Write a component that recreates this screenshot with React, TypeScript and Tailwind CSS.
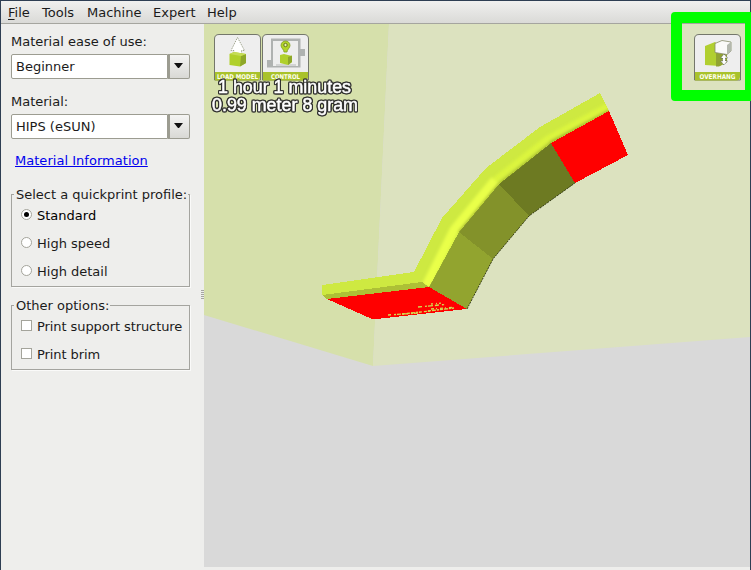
import { useState } from "react";
import type { ReactNode } from "react";

function SelectBox({ label, value }: { label: string; value: string }) {
  return (
    <div className="flex h-[60px] flex-col">
      <span className="h-[22px] leading-[20px]">{label}</span>
      <div className="flex h-[25px]">
        <div className="w-[157px] rounded-l-[2px] border border-[#9c9c91] bg-white pl-1 leading-[23px]">
          {value}
        </div>
        <button className="flex w-[22px] items-center justify-center rounded-r-[2px] border border-l-2 border-[#9c9c91] bg-linear-to-b from-[#f4f4f3] to-[#d9d9d5] pb-[3px] pr-[3px]">
          <svg width="9" height="5" viewBox="0 0 9 5" className="shrink-0">
            <path d="M0 0H9L5 5H4Z" fill="#111" />
          </svg>
        </button>
      </div>
    </div>
  );
}

function Group({ title, className, children }: { title: string; className: string; children: ReactNode }) {
  return (
    <div className={`w-[179px] border border-[#a4a49f] shadow-[1px_1px_0_#fafaf9] ${className}`}>
      <div className="-mt-[10px] flex h-[20px]">
        <span className="ml-[2px] whitespace-nowrap bg-[#eeeeec] pl-[2px] pr-px leading-[20px]">{title}</span>
      </div>
      {children}
    </div>
  );
}

function Option({ kind, label, checked = false, onClick }: { kind: "radio" | "check"; label: string; checked?: boolean; onClick?: () => void }) {
  return (
    <div className="flex h-[28px] items-center gap-[5px] pl-[9px]" onClick={onClick}>
      <span
        className={`mb-px flex size-[11px] items-center justify-center border border-[#a4a49b] bg-white ${kind === "radio" ? "rounded-full" : ""}`}
      >
        {checked && <span className={`size-[5px] bg-black ${kind === "radio" ? "rounded-full" : ""}`} />}
      </span>
      <span className={`whitespace-nowrap pt-[2px] ${kind === "check" ? "tracking-[-0.08px]" : ""} ${checked ? "text-black" : ""}`}>{label}</span>
    </div>
  );
}

function ToolButton({ label, width, children }: { label: string; width: number; children: ReactNode }) {
  return (
    <svg width="47" height="47" viewBox="0 0 47 47" className="block">
      <path d="M.5 46V5Q.5.5 5 .5H42Q46.5.5 46.5 5V46Z" fill="#eee" stroke="#74776b" />
      {children}
      <path d="M1 38H46V43Q46 46.5 42 46.5H1Z" fill="#a9c22b" />
      <text
        x={(47 - width) / 2}
        y="44.5"
        textLength={width}
        lengthAdjust="spacingAndGlyphs"
        fill="#fffff0"
        fontSize="6.5"
        fontWeight="bold"
        fontFamily="DejaVu Sans, sans-serif"
      >
        {label}
      </text>
    </svg>
  );
}

function Scene() {
  return (
    <svg className="absolute inset-0" width="546" height="543" viewBox="204 24 546 543">
      <defs>
        <filter id="soft" x="-10%" y="-10%" width="120%" height="120%">
          <feGaussianBlur stdDeviation="1.8" />
        </filter>
        <clipPath id="rim">
          <path d="M322 285L414 272L442 218L486 168L540 127L600 93L609 111L551 143L499 184L459 232L429 287L422 282L322 295Z" />
        </clipPath>
      </defs>
      <path d="M204 24H750V567H204Z" fill="#d9d9d9" />
      <path d="M204 24H389L373 366L204 315Z" fill="#d6e0ab" />
      <path d="M389 24H750V337L373 366Z" fill="#dce2bf" />
      <g shapeRendering="crispEdges">
        <path d="M322 285L414 272L442 218L486 168L540 127L600 93L609 111L551 143L499 184L459 232L429 287L422 282L322 295Z" fill="#cee941" />
        <path d="M429 287L459 232L493 259L467 309Z" fill="#92a42f" />
        <path d="M459 232L499 184L529 216L493 259Z" fill="#83922a" />
        <path d="M499 184L551 143L575 183L529 216Z" fill="#6d7a22" />
      </g>
      <g clipPath="url(#rim)">
        <g filter="url(#soft)" fill="none">
          <path d="M426 286L454 230L495 180" stroke="#e9ff4a" strokeWidth="9" />
          <path d="M495 180L547 139L608 106" stroke="#dbf53d" strokeWidth="6" />
          <path d="M460 233L500 185L552 144" stroke="#a6b92f" strokeWidth="5" />
          <path d="M551 144L611 112" stroke="#a6b92f" strokeWidth="6" />
        </g>
      </g>
      <g shapeRendering="crispEdges">
        <path d="M322 295L422 282L429 287L327 299Z" fill="#adc036" />
        <path d="M327 299L429 287L467 309L376 319H372Z" fill="red" />
        <path d="M551 143L609 111L628 155L575 183Z" fill="red" />
      </g>
      <path d="M467 309L493 259L529 216L575 183" fill="none" stroke="#39401c" strokeWidth="1" strokeDasharray="2 1" />
      <g stroke="#d2dc50" strokeWidth="1.4" fill="none">
        <path d="M388 315L419 313" strokeDasharray="3 3 2 1 4 1 2 1" />
        <path d="M402 314L430 311" strokeDasharray="3 2 3 1 4 1 2 1" />
        <path d="M428 311L454 308" strokeDasharray="3 1 4 1 2 1" />
        <path d="M431 309L452 307.5" strokeDasharray="3 2 1 3" />
        <path d="M418 307L445 304.5" strokeDasharray="4 3 2 1 5 2" />
        <path d="M431 304L443 303" strokeDasharray="2 3 1 2" />
      </g>
    </svg>
  );
}

const times = ["1 hour 1 minutes", "0.99 meter 8 gram"];

export default function App() {
  const [profile, setProfile] = useState("Standard");
  return (
    <div className="relative flex h-[570px] w-[751px] flex-col overflow-hidden bg-[#eeeeec] font-['DejaVu_Sans',sans-serif] text-[13px] text-[#1b1b1b]">
      <div className="flex h-[570px] flex-col border-x border-t border-[#2e3e53]">
        <nav className="flex h-[23px] shrink-0 border-b border-[#a5a59f] bg-linear-to-b from-[#f0f0ef] to-[#dadad7] pl-[7px] leading-[23px]">
          <span className="w-[34px]"><span className="underline underline-offset-2">F</span>ile</span>
          <span className="w-[45px]">Tools</span>
          <span className="w-[66px]">Machine</span>
          <span className="w-[54px]">Expert</span>
          <span>Help</span>
        </nav>
        <div className="flex h-[543px]">
          <aside className="flex w-[203px] shrink-0">
            <div className="w-[199px] pl-[10px] pt-[8px]">
              <SelectBox label="Material ease of use:" value="Beginner" />
              <SelectBox label="Material:" value="HIPS (eSUN)" />
              <div className="h-[43px] pl-[4px]">
                <a className="-mt-px block tracking-[0.03px] text-[#0000ee] underline underline-offset-1">Material Information</a>
              </div>
              <Group title="Select a quickprint profile:" className="h-[93px]">
                <div className="-mt-[4px]">
                  {["Standard", "High speed", "High detail"].map((name) => (
                    <Option key={name} kind="radio" label={name} checked={profile === name} onClick={() => setProfile(name)} />
                  ))}
                </div>
              </Group>
              <Group title="Other options:" className="mt-[18px] h-[65px]">
                <div className="-mt-[4px]">
                  <Option kind="check" label="Print support structure" />
                  <Option kind="check" label="Print brim" />
                </div>
              </Group>
            </div>
            <div className="mt-[266px] flex w-[4px] flex-col items-end gap-px">
              {[0, 1, 2, 3, 4].map((n) => <span key={n} className="h-px w-[3px] bg-[#a5a5a0]" />)}
            </div>
          </aside>
          <main className="relative w-[546px]">
            <Scene />
            <div className="relative flex justify-between pl-[10px] pr-[9px] pt-[10px]">
              <div className="flex gap-px">
                <ToolButton label="LOAD MODEL" width={41}>
                  <path d="M23.5 3.5L30.5 16.5H27.5V24H20V16.5H17Z" fill="#fff" stroke="#8b9275" strokeWidth=".8" strokeDasharray="1.5 1" />
                  <path d="M15.5 20L20 18L32 20V29L26 32.5L15.5 31Z" fill="#b0d02b" />
                  <path d="M27 22L32 20V29L26 32.5Z" fill="#8ea729" />
                  <path d="M15.5 20L20 18L32 20L27 22Z" fill="#c5dc55" />
                </ToolButton>
                <ToolButton label="CONTROL" width={29}>
                  <path d="M5 33.5V26H9V4.5H38.5V15H43V22H38.5V33.5Z" fill="#afb2b1" />
                  <path d="M11 7H36V32H11Z" fill="#eee" />
                  <path d="M14 31H34" stroke="#b8baba" />
                  <path d="M19 11.5C19 5.5 28 5.5 28 11.5C28 14 25 15.5 25 18H22C22 15.5 19 14 19 11.5Z" fill="#b1d428" stroke="#7f9b20" strokeWidth=".8" />
                  <circle cx="23.5" cy="11" r="1.7" fill="#edf4b9" stroke="#66761b" />
                  <path d="M18 21L22 20L30 22V28L26 31L18 29Z" fill="#b0d02b" />
                  <path d="M26 23L30 21.5V28L26 31Z" fill="#8ea729" />
                </ToolButton>
              </div>
              <ToolButton label="OVERHANG" width={36}>
                <path d="M11 12L21 8L27 13V20L33 19V28L26 32L11 31Z" fill="#b1cf30" />
                <path d="M22 19L33 20V28L25 32.5H22Z" fill="#91a332" />
                <path d="M21 9.5L28 6.5L37 8V17L33 20.5L21 18.5Z" fill="#fafaf8" stroke="#868c68" strokeWidth=".8" />
                <path d="M33 11L37 8V17L33 20.5Z" fill="#b4b8ae" />
                <path d="M30 20L33.5 24H31.5V27H33.5L30 31L26.5 27H28.5V24H26.5Z" fill="#fff" stroke="#5f6656" strokeWidth=".8" strokeDasharray="1.5 .7" />
              </ToolButton>
            </div>
            <svg className="absolute left-0 top-[50px] [filter:drop-shadow(1px_0_0_#30302e)_drop-shadow(-1px_0_0_#30302e)_drop-shadow(0_1px_0_#30302e)_drop-shadow(0_-1px_0_#30302e)]" width="170" height="45" viewBox="0 0 170 45">
              {times.map((line, i) => (
                <text
                  key={line}
                  x={i === 0 ? 14 : 8}
                  y={i === 0 ? 19 : 37}
                  textLength={i === 0 ? 133 : 146}
                  lengthAdjust="spacingAndGlyphs"
                  fontFamily="Liberation Sans, sans-serif"
                  fontSize="18"
                  fill="#fff"
                  stroke="#fff"
                  strokeWidth=".5"
                >
                  {line}
                </text>
              ))}
            </svg>
          </main>
        </div>
      </div>
      <div className="absolute left-[671px] top-[12px] h-[89px] w-[85px] rounded-[4px] border-[11px] border-[#00ff00]" />
    </div>
  );
}
